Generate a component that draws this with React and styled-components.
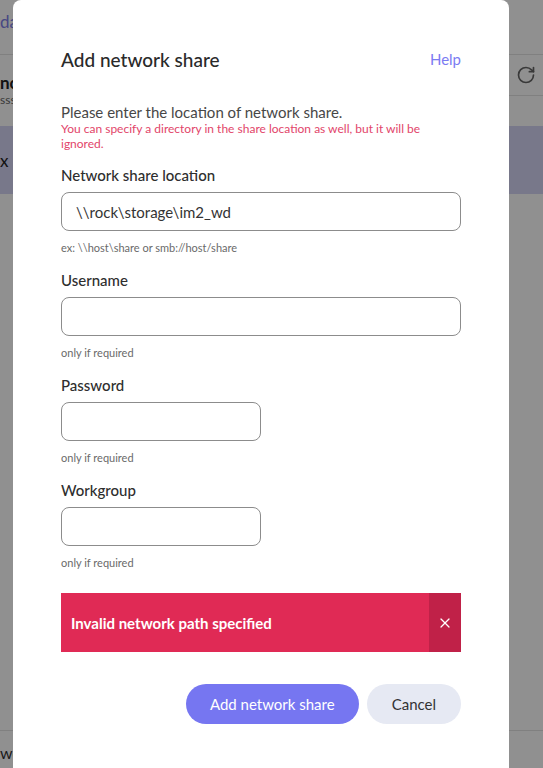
import React from 'react';
import styled, { createGlobalStyle } from 'styled-components';
import { RotateCw, X } from 'lucide-react';

const Global = createGlobalStyle`
  html, body { margin: 0; padding: 0; height: 100%; overflow: hidden; }
  body { font-family: Lato, "Noto Sans", sans-serif; background: #fff; }
  * { box-sizing: border-box; }
`;

/* ---------- background page ---------- */
const Page = styled.div`
  width: 543px;
  height: 768px;
  display: flex;
  flex-direction: column;
  background: #fff;
  overflow: hidden;
  color: #222;
`;
const TopBar = styled.div`
  height: 55px;
  border-bottom: 1px solid #e2e2e2;
  padding-top: 12px;
  font-size: 17px;
  line-height: 20px;
  color: #8080e8;
`;
const HeaderRow = styled.div`
  display: flex;
  justify-content: space-between;
  align-items: flex-start;
`;
const HeaderText = styled.div`
  padding-top: 18px;
  display: flex;
  flex-direction: column;
`;
const PageTitle = styled.div`
  font-size: 17px;
  font-weight: 700;
  line-height: 20px;
`;
const PageSub = styled.div`
  font-size: 12px;
  line-height: 14px;
  color: #666;
`;
const RefreshCell = styled.div`
  width: 40px;
  height: 41px;
  border-bottom: 1px solid #e2e2e2;
  display: flex;
  align-items: center;
  justify-content: center;
  color: #666;
  padding-left: 6px;
`;
const Band = styled.div`
  margin-top: 19px;
  height: 68px;
  background: #d5d5f4;
  display: flex;
  align-items: center;
  font-size: 17px;
  color: #222;
`;
const Spacer = styled.div`
  flex: 1;
`;
const Footer = styled.div`
  height: 38px;
  border-top: 1px solid #e2e2e2;
  padding-top: 12px;
  font-size: 16px;
  line-height: 20px;
  color: #333;
`;

/* ---------- overlay + dialog ---------- */
const Overlay = styled.div`
  position: fixed;
  inset: 0;
  background: rgba(0, 0, 0, 0.435);
  display: flex;
  align-items: flex-start;
  padding-left: 13px;
`;
const Dialog = styled.div`
  width: 496px;
  min-height: 800px;
  background: #fff;
  border-radius: 8px 8px 0 0;
  padding: 48px 48px 48px;
  display: flex;
  flex-direction: column;
`;
const DialogHeader = styled.div`
  display: flex;
  justify-content: space-between;
  align-items: center;
  line-height: 24px;
`;
const Title = styled.h2`
  margin: 0;
  font-size: 19px;
  font-weight: 500;
  color: #2a2a2a;
`;
const HelpLink = styled.a`
  font-size: 15px;
  color: #7b7bf2;
  text-decoration: none;
  margin-top: -3px;
`;
const Intro = styled.p`
  margin: 31px 0 0;
  font-size: 15px;
  line-height: 18px;
  color: #474747;
`;
const Warning = styled.p`
  margin: 0;
  font-size: 12px;
  line-height: 15px;
  color: #e2456a;
`;
const Fields = styled.div`
  margin-top: 14px;
  display: flex;
  flex-direction: column;
  gap: 15px;
`;
const Field = styled.div`
  display: flex;
  flex-direction: column;
`;
const Label = styled.label`
  font-size: 15px;
  font-weight: 500;
  line-height: 20px;
  color: #2e2e2e;
`;
const Input = styled.input`
  margin-top: 7px;
  width: ${(p) => (p.$narrow ? '200px' : '100%')};
  height: 39px;
  border: 1px solid #8c8c8c;
  border-radius: 8px;
  padding: 0 14px;
  font-family: Lato, "Noto Sans", sans-serif;
  font-size: 15px;
  color: #333;
  outline: none;
  background: #fff;
`;
const Hint = styled.span`
  margin-top: 9px;
  font-size: 11px;
  line-height: 15px;
  color: #6a6a6a;
`;
const ErrorBanner = styled.div`
  margin-top: 23px;
  height: 59px;
  display: flex;
  background: #e02a55;
  color: #fff;
`;
const ErrorText = styled.div`
  flex: 1;
  display: flex;
  align-items: center;
  padding-left: 10px;
  font-size: 15px;
  font-weight: 700;
`;
const CloseBox = styled.button`
  width: 32px;
  border: 0;
  background: #c02148;
  color: #fff;
  display: flex;
  align-items: center;
  justify-content: center;
  padding: 0;
`;
const Actions = styled.div`
  margin-top: 32px;
  display: flex;
  justify-content: flex-end;
  gap: 8px;
`;
const Button = styled.button`
  height: 40px;
  border: 0;
  border-radius: 20px;
  padding: 0 ${(p) => (p.$primary ? '24px' : '25px')};
  font-family: Lato, "Noto Sans", sans-serif;
  font-size: 15px;
  background: ${(p) => (p.$primary ? '#7676f1' : '#e6e9f3')};
  color: ${(p) => (p.$primary ? '#fff' : '#333')};
`;

export default function App() {
  return (
    <>
      <Global />
      <Page>
        <TopBar>dashboard</TopBar>
        <HeaderRow>
          <HeaderText>
            <PageTitle>ncial</PageTitle>
            <PageSub>sss</PageSub>
          </HeaderText>
          <RefreshCell>
            <RotateCw size={20} strokeWidth={2} />
          </RefreshCell>
        </HeaderRow>
        <Band>x</Band>
        <Spacer />
        <Footer>wo</Footer>
      </Page>
      <Overlay>
        <Dialog role="dialog">
          <DialogHeader>
            <Title>Add network share</Title>
            <HelpLink href="#">Help</HelpLink>
          </DialogHeader>
          <Intro>Please enter the location of network share.</Intro>
          <Warning>
            You can specify a directory in the share location as well, but it will be ignored.
          </Warning>
          <Fields>
            <Field>
              <Label>Network share location</Label>
              <Input defaultValue={'\\\\rock\\storage\\im2_wd'} />
              <Hint>{'ex: \\\\host\\share or smb://host/share'}</Hint>
            </Field>
            <Field>
              <Label>Username</Label>
              <Input />
              <Hint>only if required</Hint>
            </Field>
            <Field>
              <Label>Password</Label>
              <Input $narrow type="password" />
              <Hint>only if required</Hint>
            </Field>
            <Field>
              <Label>Workgroup</Label>
              <Input $narrow />
              <Hint>only if required</Hint>
            </Field>
          </Fields>
          <ErrorBanner>
            <ErrorText>Invalid network path specified</ErrorText>
            <CloseBox aria-label="Close">
              <X size={16} strokeWidth={1.8} />
            </CloseBox>
          </ErrorBanner>
          <Actions>
            <Button $primary>Add network share</Button>
            <Button>Cancel</Button>
          </Actions>
        </Dialog>
      </Overlay>
    </>
  );
}
